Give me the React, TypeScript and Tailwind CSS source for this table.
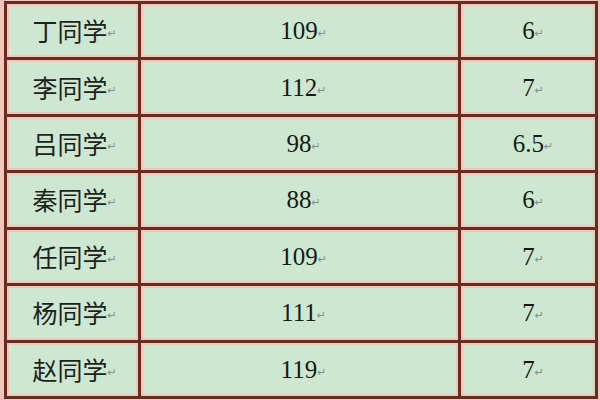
const ROWS = [
  { name: '丁同学', score: '109', level: '6' },
  { name: '李同学', score: '112', level: '7' },
  { name: '吕同学', score: '98', level: '6.5' },
  { name: '秦同学', score: '88', level: '6' },
  { name: '任同学', score: '109', level: '7' },
  { name: '杨同学', score: '111', level: '7' },
  { name: '赵同学', score: '119', level: '7' },
]

function Mark() {
  return (
    <span className="self-end pb-[4px] text-[11px] leading-none text-[#8a8f88] [font-family:'DejaVu_Sans',sans-serif]">
      ↵
    </span>
  )
}

function Cell({ children, serif, pad }: { children: React.ReactNode; serif?: boolean; pad: string }) {
  return (
    <div className={'flex items-center justify-center border-2 border-[#f1c6b9] bg-[#cee7d1] ' + pad}>
      <div
        className={
          serif
            ? "flex items-end text-[25px] leading-none text-[#141c14] [font-family:'Liberation_Serif',serif]"
            : "flex items-end text-[25px] leading-none text-[#1c231c] [font-family:'Noto_Sans_CJK_SC',sans-serif]"
        }
      >
        <span>{children}</span>
        <Mark />
      </div>
    </div>
  )
}

export default function App() {
  return (
    <div className="h-[400px] w-[600px] overflow-hidden bg-[#f2c7ba] pl-[4px] pt-[1px]">
      <div className="grid h-[398px] w-[594px] grid-cols-[131px_317px_134px] grid-rows-7 gap-[3px] bg-[#662c22] p-[3px]">
        {ROWS.map((r) => (
          <>
            <Cell key={r.name + 'n'} pad="pl-[4px]">
              {r.name}
            </Cell>
            <Cell key={r.name + 's'} serif pad="pl-[8px]">
              {r.score}
            </Cell>
            <Cell key={r.name + 'l'} serif pad="pl-[10px]">
              {r.level}
            </Cell>
          </>
        ))}
      </div>
    </div>
  )
}
